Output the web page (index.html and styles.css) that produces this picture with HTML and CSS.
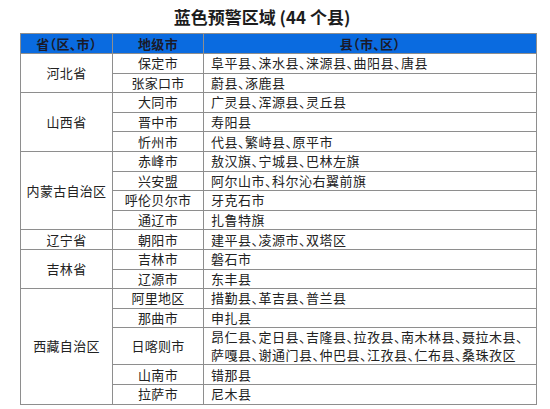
FILE: index.html
```html
<!DOCTYPE html>
<html lang="zh">
<head>
<meta charset="utf-8">
<link rel="stylesheet" href="styles.css">
</head>
<body>
<div class="page">
  <h1 class="title">蓝色预警区域 (44 个县)</h1>
  <table class="grid">
    <colgroup><col class="c1"><col class="c2"><col class="c3"></colgroup>
    <thead>
      <tr><th>省（区、市）</th><th>地级市</th><th>县（市、区）</th></tr>
    </thead>
    <tbody>
      <tr><td class="prov" rowspan="2">河北省</td><td class="city">保定市</td><td class="cnty">阜平县、涞水县、涞源县、曲阳县、唐县</td></tr>
      <tr><td class="city">张家口市</td><td class="cnty">蔚县、涿鹿县</td></tr>
      <tr><td class="prov" rowspan="3">山西省</td><td class="city">大同市</td><td class="cnty">广灵县、浑源县、灵丘县</td></tr>
      <tr><td class="city">晋中市</td><td class="cnty">寿阳县</td></tr>
      <tr><td class="city">忻州市</td><td class="cnty">代县、繁峙县、原平市</td></tr>
      <tr><td class="prov" rowspan="4">内蒙古自治区</td><td class="city">赤峰市</td><td class="cnty">敖汉旗、宁城县、巴林左旗</td></tr>
      <tr><td class="city">兴安盟</td><td class="cnty">阿尔山市、科尔沁右翼前旗</td></tr>
      <tr><td class="city">呼伦贝尔市</td><td class="cnty">牙克石市</td></tr>
      <tr><td class="city">通辽市</td><td class="cnty">扎鲁特旗</td></tr>
      <tr><td class="prov">辽宁省</td><td class="city">朝阳市</td><td class="cnty">建平县、凌源市、双塔区</td></tr>
      <tr><td class="prov" rowspan="2">吉林省</td><td class="city">吉林市</td><td class="cnty">磐石市</td></tr>
      <tr><td class="city">辽源市</td><td class="cnty">东丰县</td></tr>
      <tr><td class="prov" rowspan="5">西藏自治区</td><td class="city">阿里地区</td><td class="cnty">措勤县、革吉县、普兰县</td></tr>
      <tr><td class="city">那曲市</td><td class="cnty">申扎县</td></tr>
      <tr><td class="city">日喀则市</td><td class="cnty two"><span class="ln">昂仁县、定日县、吉隆县、拉孜县、南木林县、聂拉木县、</span><span class="ln">萨嘎县、谢通门县、仲巴县、江孜县、仁布县、桑珠孜区</span></td></tr>
      <tr><td class="city">山南市</td><td class="cnty">错那县</td></tr>
      <tr><td class="city">拉萨市</td><td class="cnty">尼木县</td></tr>
    </tbody>
  </table>
</div>
</body>
</html>
```

FILE: styles.css
```css
html, body {
  margin: 0;
  padding: 0;
  background: #ffffff;
}
body {
  font-family: "Noto Sans CJK SC", "Noto Sans", sans-serif;
  color: #222222;
}
.page {
  width: 550px;
  height: 409px;
  overflow: hidden;
}
.title {
  margin: 0;
  height: 33px;
  padding-right: 26px;
  font-size: 17px;
  font-weight: 700;
  line-height: 33px;
  text-align: center;
  color: #1c1c1c;
}
.grid {
  margin-left: 20px;
  width: 516px;
  border-collapse: collapse;
  table-layout: fixed;
  font-size: 13px;
  font-feature-settings: "halt";
}
.c1 { width: 92px; }
.c2 { width: 91px; }
.c3 { width: 333px; }
.grid th, .grid td {
  border: 1px solid #8e8e8e;
  padding: 0;
  height: 18.6px;
  line-height: 18px;
}
.grid th {
  background: #0a6be0;
  color: #1a1a2a;
  font-weight: 700;
  height: 19px;
  text-align: center;
  letter-spacing: 0.3px;
}
.prov, .city {
  text-align: center;
  letter-spacing: 0.3px;
}
.cnty {
  padding-left: 7px !important;
  text-align: left;
  white-space: nowrap;
  letter-spacing: 0.5px;
}
.two {
  line-height: 19.5px;
}
.ln {
  display: block;
}
```
